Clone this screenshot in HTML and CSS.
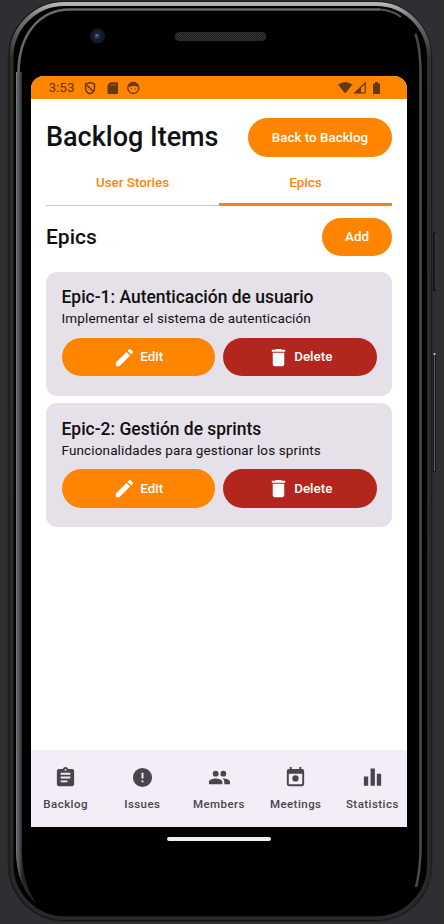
FILE: index.html
```html
<!DOCTYPE html>
<html lang="en">
<head>
<meta charset="utf-8">
<title>Backlog Items</title>
<link rel="stylesheet" href="styles.css">
</head>
<body>
<svg class="shell" viewBox="0 0 444 924" aria-hidden="true">
  <defs>
    <linearGradient id="rim" x1="0" y1="0" x2="0" y2="1">
      <stop offset="0" stop-color="#b5b5b5"/><stop offset=".015" stop-color="#777"/><stop offset=".06" stop-color="#302d2d"/><stop offset="1" stop-color="#292929"/>
    </linearGradient>
    <linearGradient id="edge" gradientUnits="userSpaceOnUse" x1="16" y1="0" x2="22" y2="0">
      <stop offset="0" stop-color="#85888d"/><stop offset=".2" stop-color="#5f6267"/><stop offset=".65" stop-color="#494b50"/><stop offset="1" stop-color="#252628"/>
    </linearGradient>
    <pattern id="mesh" width="2" height="2" patternUnits="userSpaceOnUse">
      <path d="M0 0h2v2H0z" fill="#191919"/><path d="M0 0h1v1H0zM1 1h1v1H1z" fill="#393939"/>
    </pattern>
  </defs>
  <path d="M434.500 232v59M434.500 353v119" stroke="#151618" stroke-width="3"/>
  <path d="M435.500 233v56" stroke="#3b3b3d"/>
  <path d="M434.500 354v117" stroke="#636363"/>
  <path d="M433.500 354h2" stroke="#bbb" stroke-width="2"/>
  <rect x="8" y="1" width="424" height="920.500" rx="56" fill="#141414" stroke="#242427"/>
  <rect x="11.500" y="4" width="417.500" height="914" rx="53" fill="#000" stroke="url(#rim)" stroke-width="4"/>
  <rect x="14.500" y="7" width="411" height="909" rx="50" fill="#000" stroke="#050505"/>
  <path d="M16 850V72H22V850C22.500 876 27 889 36 903C22 891 16 873 16 850Z" fill="url(#edge)"/>
  <path d="M18.500 73C18.500 35 39 9.500 70 9.500H380" fill="none" stroke="#66686c" stroke-width="2.500"/>
  <path d="M380 9.500Q393 10.500 401 17" fill="none" stroke="#55575a" stroke-width="2"/>
  <path d="M415.500 34Q420 46 420.500 70V850Q420 872 416 887" fill="none" stroke="#49494c" stroke-width="2.500"/>
  <circle cx="97.500" cy="36" r="7.500" fill="#17191f"/><circle cx="97.500" cy="36" r="5" fill="#151c31"/><circle cx="97" cy="36" r="3" fill="#29365f"/><circle cx="97" cy="35.500" r="1" fill="#7183ad"/>
  <rect x="175" y="32.500" width="91" height="8" rx="4" fill="url(#mesh)" stroke="#292929"/>
</svg>
<div class="device">
  <main class="screen">
    <div class="status">
      <span class="time">3:53</span>
      <svg class="sys-left" viewBox="0 0 56 14"><g fill="none" stroke="#653a08" stroke-width="1.500"><path d="M6 1.500 10.500 3v4C10.500 10 8.500 12 6 12.800 3.500 12 1.500 10 1.500 7V3Z"/><path d="m2 3.500 7.500 7"/></g><path d="M26 1.200h7q1 0 1 1V12q0 1-1 1h-8.500q-1 0-1-1V4Z" fill="#653a08"/><path d="M27 3v2m2-2v2m2-2v2" stroke="#a75c08"/><circle cx="49.300" cy="7" r="5.500" fill="none" stroke="#653a08" stroke-width="1.300"/><path d="M44 5q2-4 5.300-4T55 5l-2 1-1.500-1h-4L46 6Z" fill="#653a08"/><path d="M47 8h.8m3 0h.8" stroke="#653a08" stroke-width="1.300"/></svg>
      <svg class="sys-right" viewBox="0 0 43 14"><path d="M0 3.500Q7.200-1.500 14.400 3.500L7.200 12.500Z" fill="#653a08"/><path d="M16.800 12 27.200 2V12Z" fill="none" stroke="#653a08" stroke-width="1.200"/><path d="M17 12 23 6v6Z" fill="#653a08"/><path d="M37 1h3v1.500h2V13h-7V2.500h2Z" fill="#653a08"/></svg>
    </div>
    <div class="content">
      <header class="row title-row"><h1>Backlog Items</h1><button class="btn back">Back to Backlog</button></header>
      <nav class="tabs"><a class="tab">User Stories</a><a class="tab active">Epics</a></nav>
      <div class="row section-row"><h2>Epics</h2><button class="btn add">Add</button></div>
      <section class="cards">
        <article class="card">
          <h3>Epic-1: Autenticación de usuario</h3>
          <p>Implementar el sistema de autenticación</p>
          <div class="actions">
            <button class="btn"><svg viewBox="0 0 24 24"><path d="M3 17.250V21h3.750L17.810 9.940l-3.750-3.750ZM20.710 7.040a1 1 0 0 0 0-1.410l-2.340-2.340a1 1 0 0 0-1.410 0l-1.830 1.830 3.750 3.750Z"/></svg>Edit</button>
            <button class="btn danger"><svg viewBox="0 0 24 24"><path d="M6 19c0 1.100.9 2 2 2h8c1.100 0 2-.9 2-2V7H6ZM19 4h-3.500l-1-1h-5l-1 1H5v2h14Z"/></svg>Delete</button>
          </div>
        </article>
        <article class="card">
          <h3>Epic-2: Gestión de sprints</h3>
          <p>Funcionalidades para gestionar los sprints</p>
          <div class="actions">
            <button class="btn"><svg viewBox="0 0 24 24"><path d="M3 17.250V21h3.750L17.810 9.940l-3.750-3.750ZM20.710 7.040a1 1 0 0 0 0-1.410l-2.340-2.340a1 1 0 0 0-1.410 0l-1.830 1.830 3.750 3.750Z"/></svg>Edit</button>
            <button class="btn danger"><svg viewBox="0 0 24 24"><path d="M6 19c0 1.100.9 2 2 2h8c1.100 0 2-.9 2-2V7H6ZM19 4h-3.500l-1-1h-5l-1 1H5v2h14Z"/></svg>Delete</button>
          </div>
        </article>
      </section>
    </div>
    <nav class="bottom">
      <a><svg viewBox="0 0 24 24"><path d="M19 3h-4.180C14.400 1.840 13.300 1 12 1s-2.400.84-2.820 2H5c-1.100 0-2 .9-2 2v14c0 1.100.9 2 2 2h14c1.100 0 2-.9 2-2V5c0-1.100-.9-2-2-2Zm-7 0a1 1 0 1 1 0 2 1 1 0 0 1 0-2Zm2 14H7v-2h7Zm3-4H7v-2h10Zm0-4H7V7h10Z"/></svg>Backlog</a>
      <a><svg viewBox="0 0 24 24"><path d="M12 2a10 10 0 1 0 0 20 10 10 0 0 0 0-20Zm1 15h-2v-2h2Zm0-4h-2V7h2Z"/></svg>Issues</a>
      <a><svg viewBox="0 0 24 24"><path d="M16 11a3 3 0 1 0 0-6 3 3 0 0 0 0 6Zm-8 0a3 3 0 1 0 0-6 3 3 0 0 0 0 6Zm0 2c-2.330 0-7 1.170-7 3.500V19h14v-2.500C15 14.170 10.330 13 8 13Zm8 0c-.29 0-.62.020-.97.050C16.190 13.890 17 15.020 17 16.500V19h6v-2.500c0-2.330-4.670-3.500-7-3.500Z"/></svg>Members</a>
      <a><svg viewBox="0 0 24 24"><path d="M19 3h-1V1h-2v2H8V1H6v2H5c-1.100 0-2 .9-2 2v14c0 1.100.9 2 2 2h14c1.100 0 2-.9 2-2V5c0-1.100-.9-2-2-2Zm0 16H5V8h14Z"/><circle cx="12" cy="13" r="3.300"/></svg>Meetings</a>
      <a><svg viewBox="0 0 24 24"><path d="M3 11h4.500v9.500H3ZM10 2.500h4.500v18H10ZM16.500 8H21v12.500h-4.500Z"/></svg>Statistics</a>
    </nav>
  </main>
  <div class="home-bar"></div>
</div>
</body>
</html>
```
FILE: styles.css
```css
* { box-sizing: border-box; }
body { margin: 0; height: 924px; overflow: hidden; background: #2d2f33; font-family: Roboto, sans-serif; color: #101012; }
.shell { position: absolute; top: 0; left: 0; width: 444px; height: 924px; }
.device { position: relative; padding: 76px 37px 0 31px; }
.screen { height: 751px; display: flex; flex-direction: column; background: #fff; border-radius: 13px 13px 0 0; overflow: hidden; }
.status { height: 23px; flex: none; display: flex; align-items: center; padding: 0 26px 0 17.5px; background: #ff8400; }
.time { width: 35.500px; font-size: 13.500px; line-height: 23px; color: #653a08; white-space: nowrap; }
.sys-left { width: 56px; height: 14px; }
.sys-right { width: 43px; height: 14px; margin-left: auto; }
.content { flex: 1; padding: 19px 15px 0; }
.row { display: flex; align-items: center; justify-content: space-between; }
h1, h2, h3, p { margin: 0; font-weight: 500; white-space: nowrap; }
h1 { font-size: 27px; line-height: 38px; }
h2 { font-size: 21px; line-height: 38px; }
.btn { display: flex; align-items: center; justify-content: center; height: 38.5px; padding: 1px 0 0; border: 0; border-radius: 20px; background: #ff8400; color: #fff; font: 500 13.400px/20px Roboto, sans-serif; white-space: nowrap; }
.btn.danger { background: #b3261e; }
.back { width: 144px; }
.add { width: 70px; }
.tabs { height: 49px; display: flex; border-bottom: 1px solid #c9c5ca; }
.tab { flex: 1; height: 49px; padding-top: 16.500px; border-bottom: 2px solid transparent; text-align: center; font-size: 13.400px; line-height: 20px; font-weight: 500; color: #f98612; }
.tab.active { border-bottom: 3px solid #fa8413; }
.section-row { margin-top: 12px; }
.cards { display: grid; gap: 7.500px; margin-top: 15.500px; }
.card { height: 124px; padding: 14.500px 15.500px; border-radius: 11px; background: #e6e0e9; }
h3 { font-size: 17.450px; line-height: 22px; }
p { font-size: 13.500px; line-height: 20px; font-weight: 450; letter-spacing: .13px; }
.actions { display: grid; grid-template-columns: 1fr 1fr; gap: 8px; margin-top: 9.500px; }
.btn svg { width: 23px; height: 23px; margin-right: 4px; fill: #fff; }
.bottom { height: 77px; flex: none; display: grid; grid-template-columns: repeat(5, 76.700px); justify-content: center; background: #f3edf7; }
.bottom a { display: flex; flex-direction: column; align-items: center; padding-top: 16px; font-size: 11.500px; line-height: 16px; font-weight: 500; letter-spacing: .45px; color: #49454f; }
.bottom svg { width: 23px; height: 23px; margin-bottom: 7px; fill: #49454f; }
.home-bar { width: 104px; height: 4px; margin: 9.500px auto 0; border-radius: 2px; background: #eee; }
```
